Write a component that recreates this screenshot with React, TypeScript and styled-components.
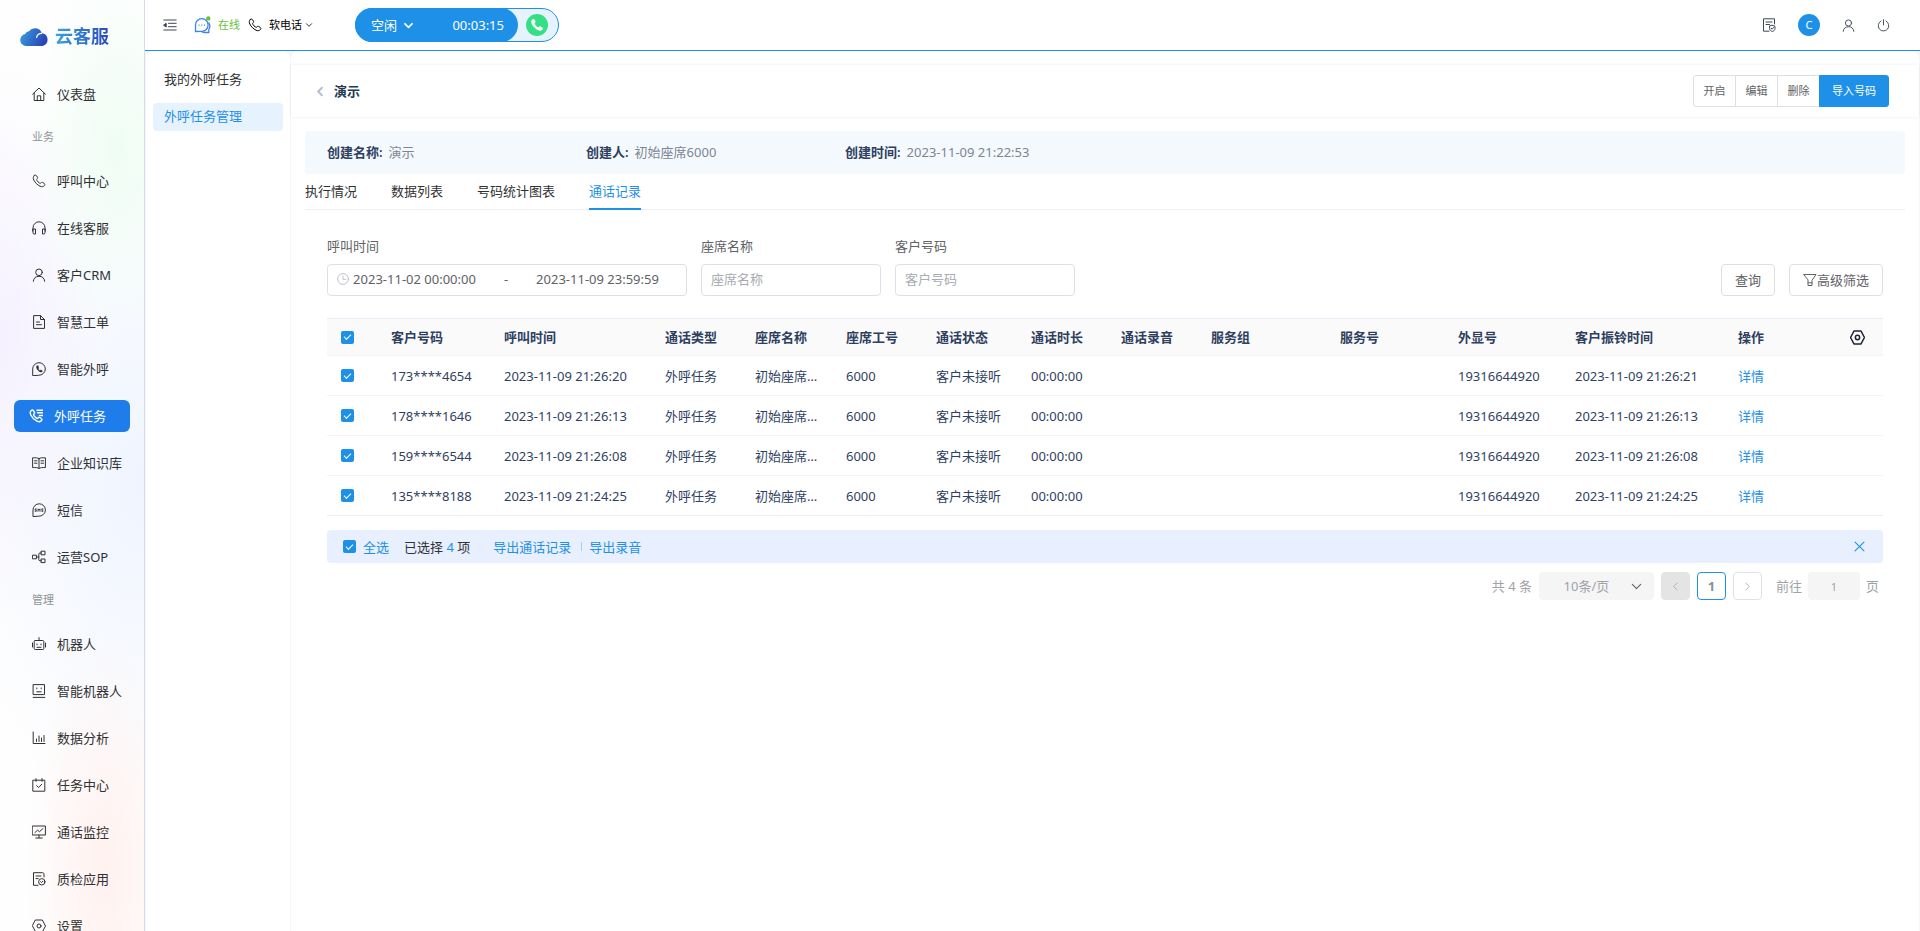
import React from "react";
import styled, { createGlobalStyle, css } from "styled-components";

const blue = "#1e90e8";
const ink = "#303133";
const navy = "#2f3f5f";

const GlobalStyle = createGlobalStyle`
  *, *::before, *::after { box-sizing: border-box; }
  body { margin: 0; background: #f5f6fb; }
  body, button, input, select {
    font-family: "Noto Sans", "Noto Sans CJK SC", sans-serif;
    font-size: 13px;
    line-height: 20px;
  }
  button { cursor: pointer; }
  a { color: inherit; text-decoration: none; }
`;

/* ---------- icons ---------- */

const Svg = styled.svg<{ $size: number; $weight: number }>`
  display: block;
  flex: none;
  width: ${(p) => p.$size}px;
  height: ${(p) => p.$size}px;
  fill: none;
  stroke: currentColor;
  stroke-width: ${(p) => p.$weight};
  stroke-linecap: round;
  stroke-linejoin: round;
`;

const phonePath =
  "M2.2 1.6c.7-.8 1.6-.8 2.2 0l1 1.5c.4.7.2 1.2-.4 1.8-.5.5-.5 1 0 1.7.6.9 1.4 1.7 2.3 2.3.7.5 1.2.5 1.7 0 .6-.6 1.1-.8 1.8-.4l1.5 1c.8.6.8 1.5 0 2.2-1.1 1.1-2.6 1.3-4.3.5C5.4 11 3 8.600 1.8 6 1 4.300 1.100 2.700 2.200 1.600z";

const shapes: Record<string, React.ReactNode> = {
  home: <path d="M.6 7.200 7 1l6.400 6.200M2.200 6v7.500h9.600V6M5.300 13.500V8.800h3.400v4.700" />,
  phone: <path d={phonePath} />,
  headset: (
    <path d="M1 10V6.800a6 6 0 0 1 12 0V10M1 8h2.500v5H2a1 1 0 0 1-1-1zM13 8h-2.500v5H12a1 1 0 0 0 1-1z" />
  ),
  user: (
    <>
      <circle cx="7" cy="4.300" r="3.300" />
      <path d="M1.300 13.300c.3-3.300 2.500-5 5.700-5s5.400 1.700 5.700 5" />
    </>
  ),
  file: <path d="M2 .6h6.500L12.500 4.500v8.900H2zM8.500.6v3.900h4M4.500 7h3M4.500 9.700h5" />,
  callout: (
    <>
      <path d="M.7 13.300V7A6.300 6.300 0 1 1 7 13.300z" />
      <path
        d="M4.700 4c-.6 1.600.2 3.200 1.500 4.400 1.200 1.200 2.600 2 4 1.400l-.2-1.300-1.300-.4-.8.6-1.700-1.700.5-.8L6.200 4z"
        fill="currentColor"
        strokeWidth=".5"
      />
    </>
  ),
  calltask: (
    <>
      <path d={phonePath} strokeWidth="1.400" />
      <path d="M8 1.200h5.500M8.500 3.800h5M10.500 6.400h3" strokeWidth="1.500" />
    </>
  ),
  book: (
    <path d="M7 2.600C5.500 1.800 3.500 1.600.6 1.800v9.800c2.900-.2 4.900 0 6.400.8 1.500-.8 3.500-1 6.400-.8V1.800C10.500 1.600 8.500 1.800 7 2.600zM7 2.600v9.800M2.500 4.800h2.500M2.500 7.200h2.500M9 4.800h2.500M9 7.200h2.500" />
  ),
  sms: (
    <>
      <path d="M1 13.200V7A6.200 6.200 0 1 1 7 13.200z" />
      <path
        d="M4.300 5.900H3.200v1.200h1.100v1.200H3.100M6 8.300V5.900l1 1.300 1-1.300v2.400M10.900 5.900H9.800v1.200h1.100v1.200H9.700"
        strokeWidth=".9"
      />
    </>
  ),
  sop: (
    <>
      <rect x=".8" y="5.200" width="3.600" height="3.600" />
      <rect x="9.400" y="1.200" width="3.600" height="3.600" />
      <rect x="9.400" y="9" width="3.600" height="3.600" />
      <path d="M4.400 7h2.400M9.400 3H8c-.8 0-1.200.4-1.200 1.200v5.400c0 .8.400 1.200 1.200 1.200h1.400" />
    </>
  ),
  robot: (
    <>
      <rect x="2.200" y="3.500" width="9.600" height="9" rx="1" />
      <path d="M7 .6v2.900M.5 6v4M13.500 6v4M5 7v.8M9 7v.8M5 10.300h4" />
    </>
  ),
  smart: (
    <>
      <rect x="1.500" y=".6" width="11" height="10" />
      <path d="M1.200 13.400h11.600M4.800 4v.8M9.200 4v.8M4.800 7.800h4.400" />
    </>
  ),
  chart: <path d="M1.200 1v11.500H13M4.500 10.500V8M7 10.500V5M9.500 10.500V7M12 10.500V4.500" />,
  calendar: (
    <>
      <path d="M1.200 2.200h11.600v11H1.200zM4 .6v2.800M10 .6v2.800" />
      <path d="m4.600 7.600 2 2 3.200-3.400" />
    </>
  ),
  monitor: <path d="M.6 1h12.800v9H.6zM7 10v2.800M3.800 13h6.400M3 7.500l2.500-2.300 2 1.500L11 3.500" />,
  quality: (
    <>
      <path d="M12 5V2.200C12 1.300 11.500.7 10.600.7H1.500v12.600H6M4 4h5M4 6.600h2.200" />
      <circle cx="9.800" cy="9.800" r="3.200" />
      <path d="m8.600 9.700.9.9 1.500-1.500" />
    </>
  ),
  gear: (
    <>
      <path d="M3.700 1h6.600L13.500 7l-3.200 6H3.700L.5 7z" />
      <circle cx="7" cy="7" r="2" />
    </>
  ),
  fold: (
    <>
      <path d="M.8 2h12.400M5.500 5.300h7.700M5.500 8.700h7.700M.8 12h12.400" />
      <path d="M.8 7 3.200 5.300v3.400z" fill="currentColor" />
    </>
  ),
  record: (
    <>
      <path d="M12.500 6V.8H1.500v12.400H7M4 4h6M4 6.500h3.500" />
      <path d="M10.300 7.300 13 8.300v2.200c0 1.500-1.200 2.500-2.700 3-1.500-.5-2.700-1.500-2.700-3V8.300zM9.200 10.300l.9.9 1.500-1.700" />
    </>
  ),
  power: <path d="M7 .8v5.500M4.200 2.200a5.700 5.700 0 1 0 5.600 0" />,
  down: <path d="m2.500 4.800 4.500 4.500 4.500-4.500" />,
  left: <path d="M9.200 2.500 4.700 7l4.500 4.500" />,
  right: <path d="M4.800 2.500 9.300 7l-4.500 4.500" />,
  back: <path d="M8.500 3 4.500 7l4 4" />,
  close: <path d="m2.200 2.200 9.600 9.600M11.800 2.200l-9.600 9.600" />,
  clock: (
    <>
      <circle cx="7" cy="7" r="6.300" />
      <path d="M7 3.500V7.500h3.200" />
    </>
  ),
  filter: <path d="M1 1.500h12L9 7.300v5.200H5V7.300zM5 9.800h4" />,
};

const Icon = ({ name, size = 14, weight = 1 }: { name: string; size?: number; weight?: number }) => (
  <Svg viewBox="0 0 14 14" $size={size} $weight={weight} aria-hidden="true">
    {shapes[name]}
  </Svg>
);

/* ---------- page frame ---------- */

const Page = styled.div`
  display: flex;
  align-items: flex-start;
  min-height: 100vh;
`;

const Sidebar = styled.aside`
  position: sticky;
  top: 0;
  flex: none;
  width: 145px;
  height: 100vh;
  overflow: hidden;
  border-right: 1px solid #d5dbe7;
  background:
    radial-gradient(ellipse 90px 190px at 118px 150px, #effdf4 0%, #effdf400 100%),
    radial-gradient(ellipse 100px 280px at 0 340px, #f5f1ff 0%, #f5f1ff00 100%),
    radial-gradient(ellipse 80px 230px at 105px 870px, #fff1ef 0%, #fff1ef00 100%),
    radial-gradient(ellipse 200px 340px at 144px 480px, #eff4ff 0%, #eff4ff00 100%),
    #fefefe;
`;

const Logo = styled.a`
  display: flex;
  align-items: center;
  gap: 6px;
  height: 70px;
  padding: 2px 0 0 20px;
`;

const LogoText = styled.span`
  font-size: 18px;
  line-height: 24px;
  font-weight: 600;
  color: transparent;
  background: linear-gradient(90deg, #3ba3de, #2a49bd);
  background-clip: text;
  -webkit-background-clip: text;
`;

const GroupTitle = styled.h2`
  margin: 0;
  padding-left: 32px;
  font-size: 11px;
  line-height: 40px;
  font-weight: 400;
  color: #8f9399;
`;

const NavRow = styled.div`
  display: flex;
  align-items: center;
  height: 47px;
  padding: 0 14px;
`;

const NavLink = styled.a<{ $active?: boolean }>`
  display: flex;
  align-items: center;
  gap: 11px;
  flex: 1;
  height: 32px;
  padding-left: 18px;
  border-radius: 6px;
  white-space: nowrap;
  color: ${ink};
  ${(p) =>
    p.$active &&
    css`
      padding-left: 15px;
      background: #1e7ceb;
      color: #fff;
    `}
`;

const Workspace = styled.div`
  display: flex;
  flex-direction: column;
  flex: 1;
  min-width: 0;
  min-height: 100vh;
`;

const TopBar = styled.header`
  display: flex;
  align-items: center;
  height: 51px;
  padding: 0 30px 0 18px;
  border-bottom: 1px solid ${blue};
  background: #fff;
  font-size: 11px;
`;

const IconButton = styled.button`
  display: flex;
  align-items: center;
  justify-content: center;
  padding: 0;
  border: 0;
  background: none;
  color: #3c4658;
`;

const Online = styled.span`
  display: flex;
  align-items: center;
  gap: 7px;
  margin: 0 8px 0 17px;
  color: #67c23a;
`;

const SoftPhone = styled.button`
  display: flex;
  align-items: center;
  gap: 7px;
  padding: 0;
  border: 0;
  background: none;
  font-size: 11px;
  color: #000;
`;

const ThinChevron = styled.span`
  margin-left: -4px;
`;

const CallPill = styled.div`
  display: flex;
  align-items: center;
  width: 204px;
  height: 34px;
  margin-left: 42px;
  border: 1px solid ${blue};
  border-radius: 17px;
  background: #e6f3fe;
`;

const CallState = styled.button`
  display: flex;
  align-items: center;
  gap: 6px;
  width: 163px;
  height: 34px;
  margin-left: -1px;
  padding: 0 14px 0 16px;
  border: 0;
  border-radius: 17px;
  background: ${blue};
  color: #fff;
`;

const Timer = styled.time`
  margin-left: auto;
`;

const Dial = styled.button`
  display: grid;
  place-items: center;
  width: 22px;
  height: 22px;
  margin: 0 auto 0 8px;
  padding: 0;
  border: 0;
  border-radius: 50%;
  background: #35e084;
  color: #fff;
`;

const Tools = styled.div`
  display: flex;
  align-items: center;
  gap: 22px;
  margin-left: auto;
`;

const Avatar = styled.button`
  width: 22px;
  height: 22px;
  padding: 0;
  border: 0;
  border-radius: 50%;
  background: ${blue};
  font-size: 11px;
  color: #fff;
`;

const Body = styled.div`
  display: flex;
  flex: 1;
  gap: 1px;
  padding: 0 1px;
`;

const SubMenu = styled.nav`
  flex: none;
  width: 144px;
  padding: 15px 7px;
  border-radius: 8px 8px 0 0;
  background: #fff;
`;

const SubLink = styled.a<{ $active?: boolean }>`
  display: block;
  margin-bottom: 9px;
  padding: 3px 11px 5px;
  border-radius: 4px;
  color: ${(p) => (p.$active ? blue : ink)};
  background: ${(p) => (p.$active ? "#e6f3fe" : "transparent")};
`;

const Content = styled.main`
  flex: 1;
  min-width: 0;
  padding-top: 14px;
  border-radius: 8px 8px 0 0;
  background: #fff;
`;

/* ---------- content ---------- */

const TitleBar = styled.div`
  display: flex;
  align-items: center;
  height: 52px;
  padding: 0 30px 0 23px;
  box-shadow: 0 0 3px #1b2b5018;
`;

const Title = styled.h1`
  margin: 0 auto 0 7px;
  font-size: 13px;
  font-weight: 600;
  color: #24384f;
`;

const BackButton = styled(IconButton)`
  color: #b4c0d0;
`;

const ButtonGroup = styled.div`
  display: flex;
  height: 32px;
`;

const GroupButton = styled.button<{ $primary?: boolean }>`
  width: ${(p) => (p.$primary ? 70 : 43)}px;
  margin-left: -1px;
  padding: 0;
  border: 1px solid ${(p) => (p.$primary ? blue : "#dcdfe6")};
  background: ${(p) => (p.$primary ? blue : "#fff")};
  font-size: 11px;
  color: ${(p) => (p.$primary ? "#fff" : "#606266")};
  &:first-child { border-radius: 3px 0 0 3px; }
  &:last-child { border-radius: 0 3px 3px 0; }
`;

const Summary = styled.dl`
  display: flex;
  align-items: center;
  height: 43px;
  margin: 14px 14px 0;
  padding: 0 0 2px 22px;
  border-radius: 4px;
  background: #f4f9fe;
`;

const SummaryItem = styled.div`
  display: flex;
  gap: 6px;
  width: 259px;
  dt { font-weight: 600; color: ${navy}; }
  dd { margin: 0; color: #7d8594; }
`;

const Tabs = styled.div`
  display: flex;
  gap: 34px;
  margin: 0 14px;
  border-bottom: 1px solid #edeff2;
`;

const Tab = styled.button<{ $active?: boolean }>`
  height: 36px;
  margin-bottom: -1px;
  padding: 0;
  border: 0;
  border-bottom: 2px solid ${(p) => (p.$active ? blue : "transparent")};
  background: none;
  color: ${(p) => (p.$active ? blue : ink)};
`;

const Panel = styled.section`
  margin: 0 36px;
  padding-top: 26px;
`;

const Filters = styled.form`
  display: flex;
  align-items: flex-end;
  gap: 14px;
  margin-bottom: 22px;
`;

const Field = styled.div<{ $wide?: boolean }>`
  display: flex;
  flex-direction: column;
  gap: 8px;
  width: ${(p) => (p.$wide ? 360 : 180)}px;
  color: #606266;
`;

const box = css`
  height: 32px;
  border: 1px solid #dcdfe6;
  border-radius: 4px;
  background: #fff;
  color: #606266;
`;

const TextInput = styled.input`
  ${box}
  width: 100%;
  padding: 0 9px 2px;
  &::placeholder { color: #a8abb2; }
`;

const DateRange = styled.div`
  ${box}
  position: relative;
  display: flex;
  align-items: center;
  padding: 0 11px 2px 9px;
`;

const ClockMark = styled.span`
  position: absolute;
  left: 9px;
  color: #b4b8c0;
`;

const DateInput = styled.input`
  flex: 1;
  min-width: 0;
  padding: 0;
  border: 0;
  background: none;
  text-align: center;
  color: #606266;
`;

const Dash = styled.span`
  width: 28px;
  text-align: center;
`;

const Spacer = styled.span`
  flex: 1;
`;

const OutlineButton = styled.button`
  ${box}
  display: flex;
  align-items: center;
  padding: 0 13px;
`;

const Table = styled.table`
  width: 100%;
  table-layout: fixed;
  border-collapse: separate;
  border-spacing: 0;
  border-bottom: 1px solid #ebeef5;
  color: ${navy};
  th, td {
    height: 40px;
    padding: 0 14px;
    border-bottom: 1px solid #f3f4f7;
    text-align: left;
    white-space: nowrap;
    overflow: hidden;
    text-overflow: ellipsis;
  }
  th {
    height: 38px;
    border-top: 1px solid #e8ebf4;
    background: #fafafa;
    font-weight: 600;
  }
  tbody tr:last-child td {
    height: 39px;
    border-bottom: 0;
  }
`;

const Check = styled.input`
  appearance: none;
  display: grid;
  place-items: center;
  width: 13px;
  height: 13px;
  margin: 0;
  border-radius: 2px;
  background: ${blue};
  &:not(:checked) { background: #fff; border: 1px solid #dcdfe6; }
  &:checked::after {
    content: "";
    width: 7px;
    height: 4px;
    margin-bottom: 2px;
    border: solid #fff;
    border-width: 0 0 1px 1px;
    transform: rotate(-45deg);
  }
`;

const ColumnSettings = styled(IconButton)`
  width: 100%;
  color: #1d2433;
`;

const TextLink = styled.a`
  color: ${blue};
`;

const SelectionBar = styled.div`
  display: flex;
  align-items: center;
  height: 33px;
  margin-top: 14px;
  padding: 0 17px 0 16px;
  border-radius: 4px;
  background: #e8effe;
  color: ${ink};
`;

const SelectAll = styled.label`
  display: flex;
  align-items: center;
  gap: 7px;
  margin-right: 15px;
  color: ${blue};
`;

const Exports = styled.span`
  display: flex;
  align-items: center;
  gap: 7px;
  margin: 0 auto 0 23px;
`;

const Divider = styled.i`
  width: 1px;
  height: 9px;
  margin-left: 3px;
  background: #a9cdf5;
`;

const CloseButton = styled(IconButton)`
  color: ${blue};
`;

const Pager = styled.nav`
  display: flex;
  align-items: center;
  justify-content: flex-end;
  gap: 7px;
  margin-top: 9px;
  padding-right: 4px;
  color: #a0a2a8;
`;

const PageSize = styled.span`
  position: relative;
  display: flex;
`;

const PageSelect = styled.select`
  appearance: none;
  width: 115px;
  height: 28px;
  padding: 0 20px 0 0;
  border: 0;
  border-radius: 4px;
  background: #f5f5f5;
  text-align-last: center;
  color: #a0a2a8;
`;

const SelectArrow = styled.span`
  position: absolute;
  top: 8px;
  right: 11px;
  color: #606266;
  pointer-events: none;
`;

const PageButton = styled.button<{ $kind?: "disabled" | "current" }>`
  display: grid;
  place-items: center;
  width: 29px;
  height: 28px;
  padding: 0;
  border: 1px solid #dfe1e5;
  border-radius: 4px;
  background: #fff;
  color: #a0a2a8;
  ${(p) =>
    p.$kind === "disabled" &&
    css`
      border-color: #e4e4e4;
      background: #e4e4e4;
    `}
  ${(p) =>
    p.$kind === "current" &&
    css`
      border-color: ${blue};
      font-weight: 700;
      color: #8c8f95;
    `}
`;

const Jump = styled.label`
  display: flex;
  align-items: center;
  gap: 6px;
  margin-left: 7px;
`;

const JumpInput = styled.input`
  width: 52px;
  height: 28px;
  padding: 0;
  border: 0;
  border-radius: 4px;
  background: #f5f5f5;
  text-align: center;
  font-size: 11px;
  color: #a0a2a8;
`;

/* ---------- data ---------- */

type NavItem = { icon: string; label: string; active?: boolean };

const business: NavItem[] = [
  { icon: "phone", label: "呼叫中心" },
  { icon: "headset", label: "在线客服" },
  { icon: "user", label: "客户CRM" },
  { icon: "file", label: "智慧工单" },
  { icon: "callout", label: "智能外呼" },
  { icon: "calltask", label: "外呼任务", active: true },
  { icon: "book", label: "企业知识库" },
  { icon: "sms", label: "短信" },
  { icon: "sop", label: "运营SOP" },
];

const management: NavItem[] = [
  { icon: "robot", label: "机器人" },
  { icon: "smart", label: "智能机器人" },
  { icon: "chart", label: "数据分析" },
  { icon: "calendar", label: "任务中心" },
  { icon: "monitor", label: "通话监控" },
  { icon: "quality", label: "质检应用" },
  { icon: "gear", label: "设置" },
];

const columns: [string, number][] = [
  ["客户号码", 113],
  ["呼叫时间", 161],
  ["通话类型", 90],
  ["座席名称", 91],
  ["座席工号", 90],
  ["通话状态", 95],
  ["通话时长", 90],
  ["通话录音", 90],
  ["服务组", 129],
  ["服务号", 118],
  ["外显号", 117],
  ["客户振铃时间", 163],
  ["操作", 108],
];

const calls = [
  { phone: "173****4654", start: "2023-11-09 21:26:20", ring: "2023-11-09 21:26:21" },
  { phone: "178****1646", start: "2023-11-09 21:26:13", ring: "2023-11-09 21:26:13" },
  { phone: "159****6544", start: "2023-11-09 21:26:08", ring: "2023-11-09 21:26:08" },
  { phone: "135****8188", start: "2023-11-09 21:24:25", ring: "2023-11-09 21:24:25" },
];

/* ---------- parts ---------- */

const CloudLogo = () => (
  <svg width="29" height="19" viewBox="0 0 29 19" aria-hidden="true">
    <defs>
      <linearGradient id="cloud" x1="0" y1="0" x2="1" y2="0.300">
        <stop offset="0" stopColor="#36a3de" />
        <stop offset="1" stopColor="#2b45b8" />
      </linearGradient>
    </defs>
    <path
      d="M6 19a6 6 0 0 1-.8-11.900A4.500 4.500 0 0 1 9 4.300 7.300 7.300 0 0 1 21.800 6.200 6.500 6.500 0 0 1 22.500 19z"
      fill="url(#cloud)"
    />
    <path d="M16.500 10.800c.4-2.800 2.400-4.500 5.400-4.500" fill="none" stroke="#fff" strokeWidth="1.200" />
  </svg>
);

const ChatIcon = () => (
  <svg width="17" height="18" viewBox="0 0 17 18" fill="none" stroke="#3f83ea" aria-hidden="true">
    <path d="M1.500 15.500V9a6.300 6.300 0 1 1 6.300 6.300z" strokeWidth="1.300" />
    <path d="M14.500 6.500c1.700 2.300 1.800 4.800.3 7v3h-4.500c-1 0-2-.3-2.800-.9" strokeWidth="1.300" />
    <path d="M4.500 9.200h1M7.300 9.200h1M10 9.200h1" strokeWidth="1.300" />
    <circle cx="14.300" cy="2.400" r="2.200" fill="#67c23a" stroke="none" />
  </svg>
);

const NavGroup = ({ items }: { items: NavItem[] }) => (
  <>
    {items.map((item) => (
      <NavRow key={item.label}>
        <NavLink href="#" $active={item.active} aria-current={item.active ? "page" : undefined}>
          <Icon name={item.icon} />
          {item.label}
        </NavLink>
      </NavRow>
    ))}
  </>
);

const CallTable = () => (
  <Table>
    <colgroup>
      <col width={50} />
      {columns.map(([name, width]) => (
        <col key={name} width={width} />
      ))}
      <col width={51} />
    </colgroup>
    <thead>
      <tr>
        <th>
          <Check type="checkbox" defaultChecked aria-label="全选" />
        </th>
        {columns.map(([name]) => (
          <th key={name}>{name}</th>
        ))}
        <th>
          <ColumnSettings type="button" aria-label="列设置">
            <Icon name="gear" size={15} weight={1.4} />
          </ColumnSettings>
        </th>
      </tr>
    </thead>
    <tbody>
      {calls.map((call) => (
        <tr key={call.phone}>
          <td>
            <Check type="checkbox" defaultChecked aria-label={call.phone} />
          </td>
          <td>{call.phone}</td>
          <td>{call.start}</td>
          <td>外呼任务</td>
          <td>初始座席6000</td>
          <td>6000</td>
          <td>客户未接听</td>
          <td>00:00:00</td>
          <td />
          <td />
          <td />
          <td>19316644920</td>
          <td>{call.ring}</td>
          <td>
            <TextLink href="#">详情</TextLink>
          </td>
          <td />
        </tr>
      ))}
    </tbody>
  </Table>
);

export default function App() {
  return (
    <Page>
      <GlobalStyle />
      <Sidebar>
        <Logo href="#">
          <CloudLogo />
          <LogoText>云客服</LogoText>
        </Logo>
        <nav>
          <NavGroup items={[{ icon: "home", label: "仪表盘" }]} />
          <GroupTitle>业务</GroupTitle>
          <NavGroup items={business} />
          <GroupTitle>管理</GroupTitle>
          <NavGroup items={management} />
        </nav>
      </Sidebar>

      <Workspace>
        <TopBar>
          <IconButton type="button" aria-label="折叠菜单">
            <Icon name="fold" />
          </IconButton>
          <Online>
            <ChatIcon />
            在线
          </Online>
          <SoftPhone type="button">
            <Icon name="phone" />
            软电话
            <ThinChevron>
              <Icon name="down" size={8} weight={1.4} />
            </ThinChevron>
          </SoftPhone>
          <CallPill>
            <CallState type="button">
              空闲
              <Icon name="down" size={11} weight={2.2} />
              <Timer>00:03:15</Timer>
            </CallState>
            <Dial type="button" aria-label="拨号">
              <svg width="14" height="14" viewBox="0 0 14 14" fill="currentColor" aria-hidden="true">
                <path d={phonePath} />
              </svg>
            </Dial>
          </CallPill>
          <Tools>
            <IconButton type="button" aria-label="记录">
              <Icon name="record" />
            </IconButton>
            <Avatar type="button">C</Avatar>
            <IconButton type="button" aria-label="用户">
              <Icon name="user" size={13} />
            </IconButton>
            <IconButton type="button" aria-label="退出">
              <Icon name="power" size={13} />
            </IconButton>
          </Tools>
        </TopBar>

        <Body>
          <SubMenu>
            <SubLink href="#">我的外呼任务</SubLink>
            <SubLink href="#" $active>
              外呼任务管理
            </SubLink>
          </SubMenu>

          <Content>
            <TitleBar>
              <BackButton type="button" aria-label="返回">
                <Icon name="back" size={13} weight={2.2} />
              </BackButton>
              <Title>演示</Title>
              <ButtonGroup>
                <GroupButton type="button">开启</GroupButton>
                <GroupButton type="button">编辑</GroupButton>
                <GroupButton type="button">删除</GroupButton>
                <GroupButton type="button" $primary>
                  导入号码
                </GroupButton>
              </ButtonGroup>
            </TitleBar>

            <Summary>
              <SummaryItem>
                <dt>创建名称:</dt>
                <dd>演示</dd>
              </SummaryItem>
              <SummaryItem>
                <dt>创建人:</dt>
                <dd>初始座席6000</dd>
              </SummaryItem>
              <SummaryItem>
                <dt>创建时间:</dt>
                <dd>2023-11-09 21:22:53</dd>
              </SummaryItem>
            </Summary>

            <Tabs role="tablist">
              {["执行情况", "数据列表", "号码统计图表", "通话记录"].map((label) => {
                const active = label === "通话记录";
                return (
                  <Tab key={label} type="button" role="tab" aria-selected={active} $active={active}>
                    {label}
                  </Tab>
                );
              })}
            </Tabs>

            <Panel>
              <Filters>
                <Field $wide>
                  <label htmlFor="start">呼叫时间</label>
                  <DateRange>
                    <ClockMark>
                      <Icon name="clock" size={12} />
                    </ClockMark>
                    <DateInput id="start" defaultValue="2023-11-02 00:00:00" />
                    <Dash>-</Dash>
                    <DateInput aria-label="结束时间" defaultValue="2023-11-09 23:59:59" />
                  </DateRange>
                </Field>
                <Field>
                  <label htmlFor="agent">座席名称</label>
                  <TextInput id="agent" placeholder="座席名称" />
                </Field>
                <Field>
                  <label htmlFor="number">客户号码</label>
                  <TextInput id="number" placeholder="客户号码" />
                </Field>
                <Spacer />
                <OutlineButton type="button">查询</OutlineButton>
                <OutlineButton type="button">
                  <Icon name="filter" />
                  高级筛选
                </OutlineButton>
              </Filters>

              <CallTable />

              <SelectionBar>
                <SelectAll>
                  <Check type="checkbox" defaultChecked />
                  全选
                </SelectAll>
                <span>
                  已选择 <TextLink as="span">4</TextLink> 项
                </span>
                <Exports>
                  <TextLink href="#">导出通话记录</TextLink>
                  <Divider />
                  <TextLink href="#">导出录音</TextLink>
                </Exports>
                <CloseButton type="button" aria-label="关闭">
                  <Icon name="close" size={13} weight={1.2} />
                </CloseButton>
              </SelectionBar>

              <Pager aria-label="分页">
                <span>共 4 条</span>
                <PageSize>
                  <PageSelect aria-label="每页条数" defaultValue="10">
                    <option value="10">10条/页</option>
                    <option value="20">20条/页</option>
                    <option value="50">50条/页</option>
                  </PageSelect>
                  <SelectArrow>
                    <Icon name="down" size={13} weight={1.2} />
                  </SelectArrow>
                </PageSize>
                <PageButton type="button" $kind="disabled" aria-label="上一页">
                  <Icon name="left" size={11} />
                </PageButton>
                <PageButton type="button" $kind="current">
                  1
                </PageButton>
                <PageButton type="button" aria-label="下一页">
                  <Icon name="right" size={11} />
                </PageButton>
                <Jump>
                  前往
                  <JumpInput defaultValue="1" />
                  页
                </Jump>
              </Pager>
            </Panel>
          </Content>
        </Body>
      </Workspace>
    </Page>
  );
}
